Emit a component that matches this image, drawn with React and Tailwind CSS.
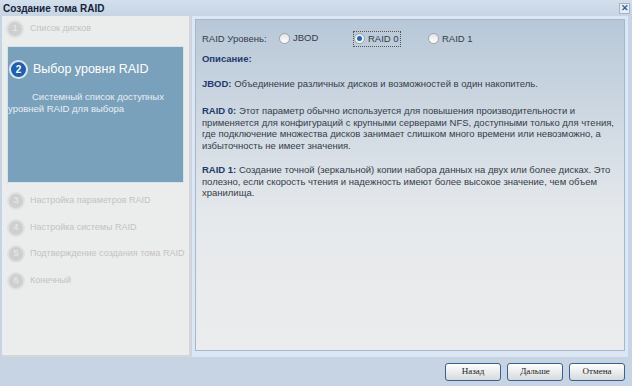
import React from "react";

const steps = [
  { n: 3, label: "Настройка параметров RAID" },
  { n: 4, label: "Настройка системы RAID" },
  { n: 5, label: "Подтверждение создания тома RAID" },
  { n: 6, label: "Конечный" },
];

function StepDot({ n }) {
  return (
    <div className="w-[18px] h-[18px] rounded-full bg-[#cfcfcf] border-2 border-[#e0e0e0] flex items-center justify-center text-[9px] text-[#ebebeb] shrink-0">
      {n}
    </div>
  );
}

function Radio({ label, checked, focus }) {
  return (
    <label
      className={
        "inline-flex items-center gap-[3px] h-[16px] pr-[1px] " +
        (focus ? "border border-dotted border-[#555]" : "border border-transparent")
      }
    >
      <span className="w-[11px] h-[11px] rounded-full border border-[#9aa4ae] bg-gradient-to-b from-[#e4e4e4] to-white flex items-center justify-center">
        {checked && <span className="w-[5px] h-[5px] rounded-full bg-[#1d6bb3]" />}
      </span>
      <span>{label}</span>
    </label>
  );
}

function Btn({ children }) {
  return (
    <button className="w-[56px] h-[18px] rounded-[3px] border border-[#3d5f8e] bg-gradient-to-b from-white to-[#d6d9dd] text-[9px] text-[#222] font-['Liberation_Serif',serif]">
      {children}
    </button>
  );
}

export default function App() {
  return (
    <div className="w-[632px] h-[386px] bg-[#c6d4e4] flex flex-col overflow-hidden font-['Liberation_Sans',Arial,sans-serif] text-[9.5px]">
      {/* title */}
      <div className="h-[16px] flex items-center justify-between pl-[3px] pr-[2px] bg-gradient-to-b from-[#d3dfec] to-[#c6d4e4]">
        <span className="text-[10px] font-bold text-[#15243a]">Создание тома RAID</span>
        <span className="w-[11px] h-[11px] bg-[#e9eef5] border border-[#9fb3cc] flex items-center justify-center text-[9px] font-bold text-[#3b5f93] leading-none">
          ✕
        </span>
      </div>

      <div className="flex h-[341px]">
        {/* left steps */}
        <div className="ml-[2px] w-[190px] bg-[#ebecec] border-r-2 border-b-2 border-[#d4d6d8] flex flex-col pt-[4px] whitespace-nowrap text-[9px]">
          <div className="flex items-center gap-[6px] pl-[4px] h-[18px]">
            <StepDot n={1} />
            <span className="text-[#c3c3c3]">Список дисков</span>
          </div>
          <div className="mt-[8px] mx-[5px] h-[137px] bg-[#7aa1bc] border border-[#d6e2ec] pt-[13px] text-[9.5px]">
            <div className="flex items-center gap-[5px] pl-[1px]">
              <div className="w-[19px] h-[19px] rounded-full bg-[#1f5fb0] border-2 border-[#dfe6ee] flex items-center justify-center text-[10px] text-white font-bold">
                2
              </div>
              <span className="text-[12.5px] text-white">Выбор уровня RAID</span>
            </div>
            <div className="mt-[12px] text-[#e8eef3] leading-[12px]">
              <div className="pl-[24px]">Системный список доступных</div>
              <div>уровней RAID для выбора</div>
            </div>
          </div>
          <div className="mt-[9px] flex flex-col gap-[8.5px]">
            {steps.map((s) => (
              <div key={s.n} className="flex items-center gap-[5px] pl-[5px] h-[18px]">
                <StepDot n={s.n} />
                <span className="text-[#c3c3c3]">{s.label}</span>
              </div>
            ))}
          </div>
        </div>

        {/* right content */}
        <div className="flex-1 ml-[1px] mr-[4px] border-[3px] border-[#dce7f5] border-b-[6px]">
          <div className="h-full border border-[#a9b8c8] bg-gradient-to-b from-[#b8c8d8] via-[#e6e9ec] via-60% to-[#ebecec] pl-[6px] pr-[10px] pt-[10px] text-[#343d48] whitespace-nowrap">
            <div className="flex items-center">
              <span className="w-[76px]">RAID Уровень:</span>
              <div className="w-[75px]">
                <Radio label="JBOD" />
              </div>
              <div className="w-[74px]">
                <Radio label="RAID 0" checked focus />
              </div>
              <Radio label="RAID 1" />
            </div>
            <div className="mt-[4px] font-bold text-[#1e3a6a]">Описание:</div>
            <div className="mt-[11px]">
              <b className="text-[#1e3a6a]">JBOD:</b> Объединение различных дисков и возможностей в один накопитель.
            </div>
            <div className="mt-[14px] leading-[11.5px]">
              <b className="text-[#1e3a6a]">RAID 0:</b> Этот параметр обычно используется для повышения производительности и
              <br />
              применяется для конфигураций с крупными серверами NFS, доступными только для чтения,
              <br />
              где подключение множества дисков занимает слишком много времени или невозможно, а
              <br />
              избыточность не имеет значения.
            </div>
            <div className="mt-[13px] leading-[11.5px]">
              <b className="text-[#1e3a6a]">RAID 1:</b> Создание точной (зеркальной) копии набора данных на двух или более дисках. Это
              <br />
              полезно, если скорость чтения и надежность имеют более высокое значение, чем объем
              <br />
              хранилища.
            </div>
          </div>
        </div>
      </div>

      {/* footer */}
      <div className="flex-1 flex items-center justify-end gap-[6px] pr-[7px]">
        <Btn>Назад</Btn>
        <Btn>Дальше</Btn>
        <Btn>Отмена</Btn>
      </div>
    </div>
  );
}
